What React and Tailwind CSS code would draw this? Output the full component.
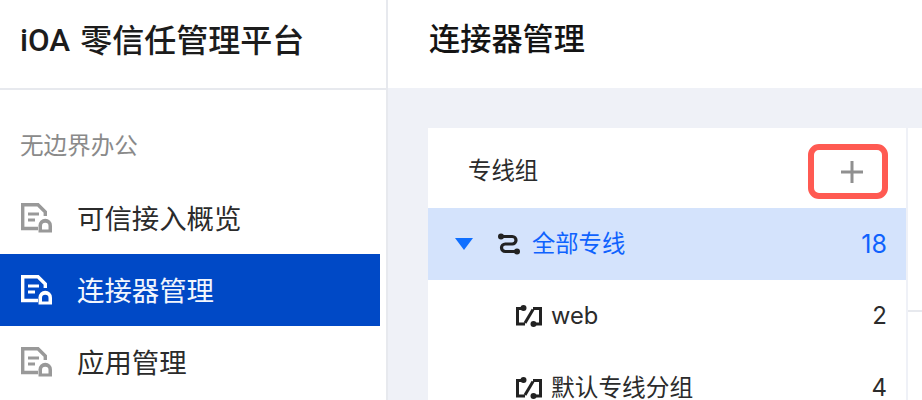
const font = { fontFamily: '"Inter", "Noto Sans CJK SC", sans-serif' };

function DocLock({ color, hole }) {
  return (
    <svg width="32" height="30" viewBox="0 0 32 30" fill="none" className="shrink-0">
      <path d="M17 25.5H1.7V1.7H17L24.3 9V13" stroke={color} strokeWidth="3.4" />
      <path d="M7 11H18M7 17H14" stroke={color} strokeWidth="2.8" />
      <path d="M17.5 29.5V22.5a6.75 6.75 0 0 1 13.5 0V29.5Z" fill={color} />
      <path d="M21 26.5V23a3.25 3.25 0 0 1 6.5 0V26.5Z" fill={hole} />
    </svg>
  );
}

function NavItem({ label, active }) {
  return (
    <div className={`flex h-[72px] w-[380px] items-center pl-[21px] ${active ? "bg-[#0049c6] text-[#f2f6fd]" : "text-[#2b2b2b]"}`}>
      <DocLock color={active ? "#ffffff" : "#999999"} hole={active ? "#0049c6" : "#ffffff"} />
      <span className="ml-[24px] pt-[3px] text-[27.4px] leading-none">{label}</span>
    </div>
  );
}

function GroupIcon() {
  return (
    <svg width="26" height="22" viewBox="0 0 26 22" fill="none" className="shrink-0">
      <path d="M8 3.5H1.5V19H9" stroke="#222" strokeWidth="3" />
      <path d="M17 3.5H24.5V19H17" stroke="#222" strokeWidth="3" />
      <path d="M9 18L17 4.5" stroke="#222" strokeWidth="3" />
      <circle cx="7.5" cy="3" r="3" fill="#222" />
      <circle cx="17.5" cy="19" r="3" fill="#222" />
    </svg>
  );
}

function SubRow({ label, count }) {
  return (
    <div className="flex h-[72px] items-center pl-[88px] pr-[19px] text-[#2b2b2b]">
      <GroupIcon />
      <span className="ml-[9px] text-[23.7px] leading-none">{label}</span>
      <span className="ml-auto text-[24px] leading-none">{count}</span>
    </div>
  );
}

export default function App() {
  return (
    <div className="flex h-[400px] w-[922px] overflow-hidden bg-white" style={font}>
      <aside className="w-[388px] shrink-0 border-r-2 border-[#e7e9ee] bg-white">
        <div className="flex h-[90px] items-center border-b-2 border-[#e7e9ee] pb-[6px] pl-[20px] text-[32px] font-medium leading-none text-[#1c1c1c]">
          <span className="font-['Roboto'] text-[31.4px]">iOA</span>
          <span className="ml-[10px]">零信任管理平台</span>
        </div>
        <div className="h-[92px] pl-[20px] pt-[44px] text-[23.6px] leading-[24px] text-[#8a8a8a]">
          无边界办公
        </div>
        <NavItem label="可信接入概览" />
        <NavItem label="连接器管理" active />
        <NavItem label="应用管理" />
      </aside>
      <main className="flex min-w-0 flex-1 flex-col bg-[#eff1f7]">
        <div className="flex h-[88px] shrink-0 items-center bg-white pb-[8px] pl-[41px] text-[31.2px] font-medium leading-none text-[#141414]">
          连接器管理
        </div>
        <div className="flex flex-1 pl-[40px] pt-[40px]">
          <div className="relative w-[478px] shrink-0 bg-white">
            <div className="flex h-[80px] items-center justify-between pl-[40px] pr-[43px] pt-[6px] text-[#2b2b2b]">
              <span className="text-[23.4px] leading-none">专线组</span>
              <svg width="22" height="22" viewBox="0 0 22 22" fill="none" className="mt-[2px]">
                <path d="M11 0V22M0 11H22" stroke="#909090" strokeWidth="3" />
              </svg>
            </div>
            <div className="absolute left-[380px] top-[16px] h-[55px] w-[80px] rounded-[11px] border-[6px] border-[#ff5a52]" />
            <div className="flex h-[72px] items-center bg-[#d4e3fc] pl-[27px] pr-[19px] text-[#0f62fe]">
              <svg width="18" height="12" viewBox="0 0 18 12" className="shrink-0">
                <path d="M0 0H18L9 12Z" fill="#0f6fff" />
              </svg>
              <svg width="22" height="22" viewBox="0 0 22 22" fill="none" className="ml-[25px] shrink-0">
                <path d="M3 3.5H14.25a3.75 3.75 0 0 1 0 7.5H7.25a3.75 3.75 0 0 0 0 7.5H19" stroke="#222" strokeWidth="3.2" />
                <circle cx="3" cy="3.5" r="3" fill="#222" />
                <circle cx="19" cy="18.5" r="3" fill="#222" />
              </svg>
              <span className="ml-[12px] text-[23.3px] leading-none">全部专线</span>
              <span className="ml-auto text-[25px] leading-none">18</span>
            </div>
            <SubRow label="web" count="2" />
            <SubRow label="默认专线分组" count="4" />
          </div>
          <div className="ml-[2px] flex-1 bg-white">
            <div className="mt-[182px] h-[2px] bg-[#e7e9ee]" />
          </div>
        </div>
      </main>
    </div>
  );
}
